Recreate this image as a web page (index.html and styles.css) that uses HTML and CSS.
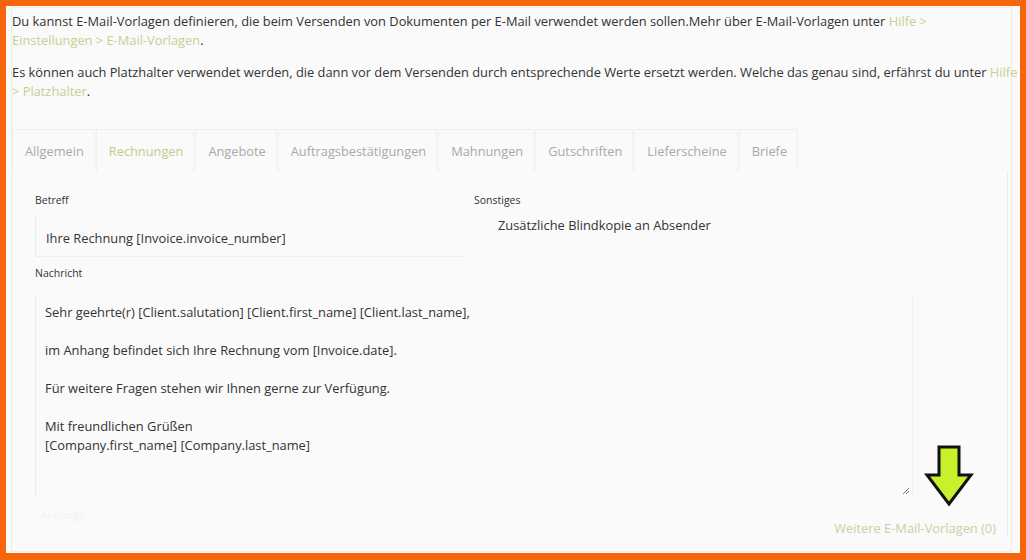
FILE: index.html
```html
<!DOCTYPE html>
<html lang="de">
<head>
<meta charset="utf-8">
<title>E-Mail-Vorlagen</title>
<link rel="stylesheet" href="styles.css">
</head>
<body>
<div class="page">
  <div class="container">
    <p class="intro">Du kannst E-Mail-Vorlagen definieren, die beim Versenden von Dokumenten per E-Mail verwendet werden sollen.Mehr über E-Mail-Vorlagen unter <a class="link">Hilfe &gt;<br>Einstellungen &gt; E-Mail-Vorlagen</a>.</p>
    <p class="intro intro-last">Es können auch Platzhalter verwendet werden, die dann vor dem Versenden durch entsprechende Werte ersetzt werden. Welche das genau sind, erfährst du unter <a class="link">Hilfe<br>&gt; Platzhalter</a>.</p>

    <div class="tabs">
      <span class="tab">Allgemein</span>
      <span class="tab active">Rechnungen</span>
      <span class="tab">Angebote</span>
      <span class="tab">Auftragsbestätigungen</span>
      <span class="tab">Mahnungen</span>
      <span class="tab">Gutschriften</span>
      <span class="tab">Lieferscheine</span>
      <span class="tab">Briefe</span>
    </div>

    <div class="panel">
      <div class="row">
        <div class="col-left">
          <div class="label">Betreff</div>
          <div class="input">Ihre Rechnung [Invoice.invoice_number]</div>
        </div>
        <div class="col-right">
          <div class="label">Sonstiges</div>
          <div class="check">Zusätzliche Blindkopie an Absender</div>
        </div>
      </div>
      <div class="label label-msg">Nachricht</div>
      <div class="textarea">
        <div class="textarea-text">Sehr geehrte(r) [Client.salutation] [Client.first_name] [Client.last_name],

im Anhang befindet sich Ihre Rechnung vom [Invoice.date].

Für weitere Fragen stehen wir Ihnen gerne zur Verfügung.

Mit freundlichen Grüßen
[Company.first_name] [Company.last_name]</div>
        <svg class="resize" width="8" height="8" viewBox="0 0 8 8"><path d="M1 7 L7 1 M4 7 L7 4" stroke="#777" stroke-width="1" fill="none"/></svg>
      </div>
      <div class="foot">
        <span class="faint">Anhänge</span>
        <a class="more">Weitere E-Mail-Vorlagen (0)</a>
      </div>
    </div>
  </div>
  <svg class="arrow" width="50" height="64" viewBox="0 0 50 64">
    <path d="M15 3 L35 3 L35 31 L47 31 L25 60 L3 31 L15 31 Z" fill="#c8f02b" stroke="#111" stroke-width="3" stroke-linejoin="miter"/>
  </svg>
</div>
</body>
</html>
```

FILE: styles.css
```css
html, body {
  margin: 0;
  padding: 0;
}
body {
  background: #f6640c;
  padding: 6px 6px 7px 6px;
  height: 560px;
  box-sizing: border-box;
  font-family: "Open Sans", "Liberation Sans", sans-serif;
  font-size: 12.85px;
  color: #333;
}
.page {
  position: relative;
  background: #fafafa;
  height: 547px;
  padding: 1px 8px 1px 5px;
  box-sizing: border-box;
  overflow: hidden;
}
.container {
  height: 100%;
  box-sizing: border-box;
  border: 1px solid #f3efdc;
  padding-top: 4px;
}
.intro {
  margin: 0 0 13px 0;
  line-height: 19px;
  white-space: nowrap;
}
.intro-last {
  margin-bottom: 28px;
}
.link {
  color: #c5d095;
  text-decoration: none;
}
.tabs {
  display: flex;
  gap: 1px;
  height: 42px;
}
.tab {
  display: flex;
  align-items: center;
  padding: 0 10px 0 12px;
  border: 1px solid #efefef;
  border-bottom: none;
  color: #a9a9a9;
  font-size: 12.8px;
  box-sizing: border-box;
}
.tab.active {
  color: #c2cc8c;
}
.panel {
  margin-right: 3px;
  border-right: 1px solid #efedf3;
  padding: 22px 0 0 23px;
}
.row {
  display: flex;
  gap: 9px;
}
.col-left {
  width: 430px;
}
.col-right {
  flex: 1;
}
.label {
  font-size: 10.5px;
  line-height: 15px;
  color: #333;
}
.input {
  margin-top: 8px;
  height: 41px;
  box-sizing: border-box;
  padding: 13px 10px 0 10px;
  line-height: 19px;
  border-left: 1px solid #ededed;
  border-bottom: 1px solid #efefef;
}
.check {
  margin-top: 8px;
  padding-left: 24px;
  line-height: 19px;
}
.label-msg {
  margin-top: 9px;
}
.textarea {
  position: relative;
  margin-top: 13px;
  width: 878px;
  height: 203px;
  box-sizing: border-box;
  border-left: 1px solid #ececec;
  border-right: 1px solid #f1f1f1;
  padding: 9px 10px 0 9px;
}
.textarea-text {
  white-space: pre-line;
  line-height: 19px;
}
.resize {
  position: absolute;
  right: 2px;
  bottom: 2px;
}
.foot {
  display: flex;
  justify-content: space-between;
  align-items: flex-start;
  padding-right: 11px;
}
.faint {
  margin-top: 11px;
  margin-left: 5px;
  font-size: 11px;
  line-height: 14px;
  color: #f2f2f2;
}
.more {
  margin-top: 22px;
  line-height: 19px;
  color: #c9d1a3;
  text-decoration: none;
}
.arrow {
  position: absolute;
  left: 918px;
  top: 438px;
}
```
